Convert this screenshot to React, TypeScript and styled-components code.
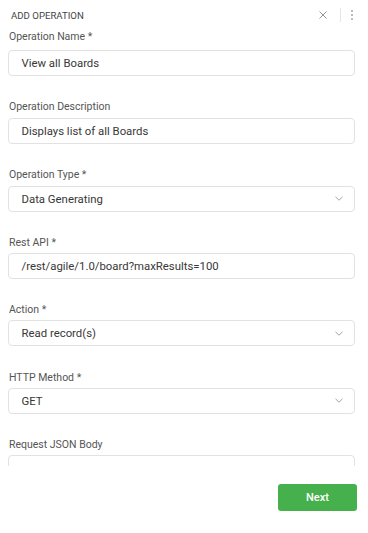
import React from "react";
import styled, { createGlobalStyle } from "styled-components";

const Global = createGlobalStyle`
  html, body { margin: 0; padding: 0; background: #ffffff; }
  body { font-family: Roboto, "Noto Sans", Arial, sans-serif; -webkit-font-smoothing: antialiased; }
  * { box-sizing: border-box; }
`;

const Panel = styled.div`
  width: 368px;
  height: 533px;
  display: flex;
  flex-direction: column;
  background: #fff;
  overflow: hidden;
`;

const Header = styled.div`
  height: 29px;
  padding: 2px 0 0 11px;
  display: flex;
  align-items: center;
  flex-shrink: 0;
`;

const Title = styled.div`
  flex: 1;
  font-size: 9.625px;
  color: #444;
  text-transform: uppercase;
  letter-spacing: 0;
`;

const Actions = styled.div`
  display: flex;
  align-items: center;
  height: 14px;
  margin-top: -2px;
`;

const IconButton = styled.div`
  width: 8px;
  height: 8px;
  display: flex;
  align-items: center;
  justify-content: center;
  margin-right: 13px;
`;

const Divider = styled.div`
  width: 1px;
  height: 14px;
  background: #e6e6e6;
  margin-right: 10px;
`;

const Dots = styled.div`
  width: 2px;
  display: flex;
  flex-direction: column;
  gap: 2px;
  margin-right: 15px;
`;

const Dot = styled.span`
  width: 2px;
  height: 2px;
  border-radius: 50%;
  background: #a5a5a5;
`;

const Form = styled.div`
  height: 437px;
  overflow: hidden;
  padding: 2.2px 13px 0 8px;
  display: flex;
  flex-direction: column;
  gap: 25.1px;
  flex-shrink: 0;
`;

const Field = styled.div`
  display: flex;
  flex-direction: column;
`;

const Label = styled.div<{ $space?: number }>`
  font-size: 10.5px;
  line-height: 12px;
  color: #555;
  padding-left: 1px;
  margin-bottom: ${(p) => p.$space ?? 4.25}px;
`;

const Box = styled.div<{ $tall?: boolean }>`
  height: ${(p) => (p.$tall ? "80px" : "26px")};
  border: 1px solid #e2e2e2;
  border-radius: 4px;
  background: #fff;
  display: flex;
  align-items: center;
  padding: 0 11px 0 12.5px;
  flex-shrink: 0;
`;

const Value = styled.span`
  flex: 1;
  font-size: 11.375px;
  color: #383838;
  white-space: nowrap;
`;

const Chevron = styled.svg`
  width: 8px;
  height: 5px;
  flex-shrink: 0;
`;

const Footer = styled.div`
  display: flex;
  justify-content: flex-end;
  padding: 18px 11px 0 0;
`;

const NextButton = styled.button`
  width: 79px;
  height: 27px;
  border: none;
  border-radius: 3px;
  background: #46b04c;
  color: #fff;
  font-family: Roboto, "Noto Sans", Arial, sans-serif;
  font-size: 11px;
  font-weight: 500;
  padding: 0;
  cursor: pointer;
`;

type FieldDef = { label: string; value: string; select?: boolean; tall?: boolean; space?: number };

const fields: FieldDef[] = [
  { label: "Operation Name *", value: "View all Boards", space: 7 },
  { label: "Operation Description", value: "Displays list of all Boards", space: 5.1 },
  { label: "Operation Type *", value: "Data Generating", select: true },
  { label: "Rest API *", value: "/rest/agile/1.0/board?maxResults=100" },
  { label: "Action *", value: "Read record(s)", select: true },
  { label: "HTTP Method *", value: "GET", select: true },
  { label: "Request JSON Body", value: "", tall: true },
];

export default function App() {
  return (
    <>
      <Global />
      <Panel>
        <Header>
          <Title>Add Operation</Title>
          <Actions>
            <IconButton>
              <svg width="8" height="8" viewBox="0 0 8 8">
                <path d="M0.5 0.5 L7.5 7.5 M7.5 0.5 L0.5 7.5" stroke="#959595" strokeWidth="1" fill="none" />
              </svg>
            </IconButton>
            <Divider />
            <Dots>
              <Dot />
              <Dot />
              <Dot />
            </Dots>
          </Actions>
        </Header>
        <Form>
          {fields.map((f) => (
            <Field key={f.label}>
              <Label $space={f.space}>{f.label}</Label>
              <Box $tall={f.tall}>
                <Value>{f.value}</Value>
                {f.select && (
                  <Chevron viewBox="0 0 8 5">
                    <path d="M0.5 0.8 L4 4.2 L7.5 0.8" stroke="#999" strokeWidth="0.9" fill="none" />
                  </Chevron>
                )}
              </Box>
            </Field>
          ))}
        </Form>
        <Footer>
          <NextButton>Next</NextButton>
        </Footer>
      </Panel>
    </>
  );
}
